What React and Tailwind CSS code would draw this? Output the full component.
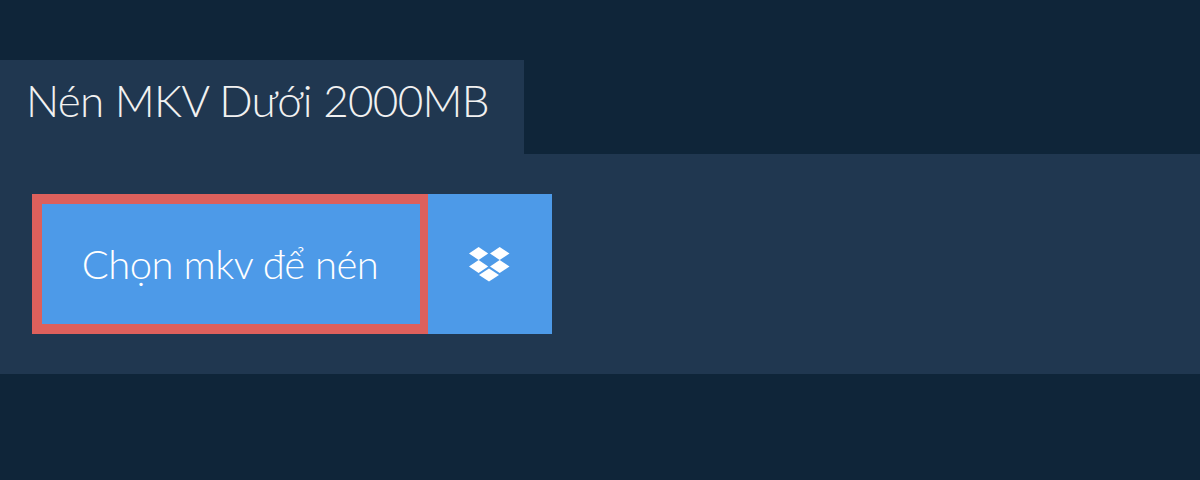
import React from 'react';

const DropboxIcon = () => (
  <svg viewBox="0 0 41 35" className="w-[41px] h-[35px] mr-[1px]" fill="currentColor">
    <polygon points="0,6.5 9.6,0 19.2,6.5 9.6,13" />
    <polygon points="21,6.5 30.7,0 40.5,6.5 30.7,13" />
    <polygon points="0,19.4 9.6,13 19.2,19.4 9.6,26" />
    <polygon points="21,19.4 30.7,13 40.5,19.4 30.7,26" />
    <polygon points="10,28 20,21.5 30,28 20,34.5" />
  </svg>
);

const App = () => {
  return (
    <div className="h-[480px] bg-[#0f2539] pt-[60px] font-['Lato',sans-serif] font-light">
      <div className="w-[524px] h-[94px] bg-[#203750] pl-[26px] pt-[12px] text-[#f1f1f1] text-[44px] leading-[56px] tracking-[-0.7px]">
        Nén MKV Dưới 2000MB
      </div>
      <div className="h-[220px] bg-[#203750] p-10 pl-8 flex">
        <button className="w-[396px] h-[140px] border-[10px] border-r-[8px] border-[#dd605c] bg-[#4d9ae8] pr-[2px] text-white text-[40px] tracking-[-0.5px] flex items-center justify-center">
          Chọn mkv để nén
        </button>
        <button className="w-[124px] h-[140px] bg-[#4d9ae8] text-white flex items-center justify-center">
          <DropboxIcon />
        </button>
      </div>
    </div>
  );
};

export default App;
